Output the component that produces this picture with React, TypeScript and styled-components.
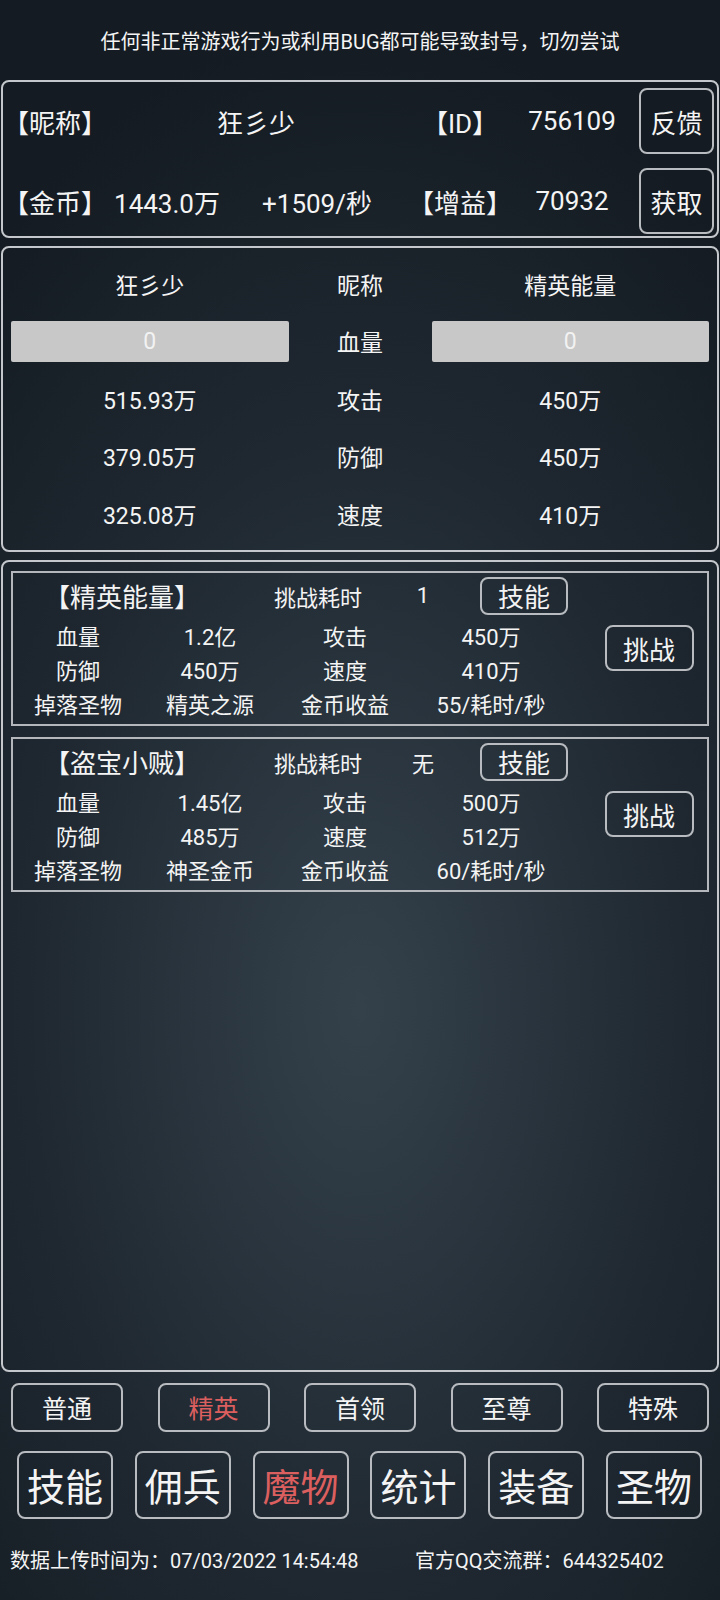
import React from "react";
import styled, { createGlobalStyle, css } from "styled-components";

interface Boss {
  name: string;
  time: string;
  hp: string;
  atk: string;
  def: string;
  spd: string;
  drop: string;
  income: string;
}

const bosses: Boss[] = [
  { name: "精英能量", time: "1", hp: "1.2亿", atk: "450万", def: "450万", spd: "410万", drop: "精英之源", income: "55/耗时/秒" },
  { name: "盗宝小贼", time: "无", hp: "1.45亿", atk: "500万", def: "485万", spd: "512万", drop: "神圣金币", income: "60/耗时/秒" },
];

const tabs = ["普通", "精英", "首领", "至尊", "特殊"];
const navs = ["技能", "佣兵", "魔物", "统计", "装备", "圣物"];

const GlobalStyle = createGlobalStyle`
  html, body {
    margin: 0;
    padding: 0;
    background: #141b22;
  }
  body {
    font-family: Roboto, "Noto Sans CJK SC", sans-serif;
    color: #f4f4f4;
  }
  * {
    box-sizing: border-box;
  }
`;

const Page = styled.div`
  width: 720px;
  min-height: 1600px;
  display: flex;
  flex-direction: column;
  background: radial-gradient(ellipse 80% 62% at 50% 63%, #34414b 0%, #1f2831 58%, #141b22 100%);
`;

const Notice = styled.div`
  height: 80px;
  display: flex;
  align-items: center;
  justify-content: center;
  font-size: 20px;
`;

const Panel = styled.div`
  margin: 0 1px;
  border: 2px solid #c4c8cc;
  border-radius: 8px;
`;

const InfoPanel = styled(Panel)`
  height: 158px;
  padding: 1px 0;
  display: grid;
  grid-template-columns: 103px 122px 178px 108px 116px 1fr;
  grid-template-rows: 76px 76px;
  row-gap: 4px;
  align-items: center;
  font-size: 26px;
`;

const Cell = styled.div<{ $span?: number }>`
  text-align: center;
  white-space: nowrap;
  ${(p) => p.$span && css`grid-column: span ${p.$span};`}
`;

const FrameButton = styled.div<{ $w: number; $h: number; $fs: number; $active?: boolean }>`
  width: ${(p) => p.$w}px;
  height: ${(p) => p.$h}px;
  border: 2px solid #b8bcc0;
  border-radius: 8px;
  display: flex;
  align-items: center;
  justify-content: center;
  font-size: ${(p) => p.$fs}px;
  color: ${(p) => (p.$active ? "#dc5f5f" : "#f4f4f4")};
  flex-shrink: 0;
`;

const ButtonSlot = styled.div`
  display: flex;
  justify-content: center;
  padding-left: 6px;
`;

const StatsPanel = styled(Panel)`
  margin-top: 8px;
  padding: 7px 8px;
  display: grid;
  grid-template-columns: 1fr 143px 1fr;
  grid-auto-rows: 57.5px;
  align-items: center;
  font-size: 23px;
`;

const HpBar = styled.div`
  height: 41px;
  background: #c8c8c8;
  border-radius: 2px;
  display: flex;
  align-items: center;
  justify-content: center;
  color: #f2f2f2;
`;

const BossPanel = styled(Panel)`
  margin-top: 8px;
  height: 812px;
  padding: 9px 8px;
  display: flex;
  flex-direction: column;
  gap: 11px;
`;

const BossCard = styled.div`
  height: 155px;
  border: 2px solid #b4b8bc;
  display: flex;
  align-items: center;
`;

const CardMain = styled.div`
  width: 566px;
  align-self: stretch;
  display: flex;
  flex-direction: column;
  padding-top: 1px;
`;

const TitleRow = styled.div`
  height: 44px;
  display: grid;
  grid-template-columns: 218px 174px 36px auto;
  align-items: center;
  font-size: 22px;
`;

const BossName = styled.div`
  text-align: center;
  font-size: 26px;
`;

const SkillSlot = styled.div`
  padding-left: 39px;
`;

const StatRow = styled.div`
  height: 34px;
  display: grid;
  grid-template-columns: 130px 134px 136px 156px;
  align-items: center;
  font-size: 22px;
`;

const ChallengeSlot = styled.div`
  flex: 1;
  display: flex;
  justify-content: center;
  padding-left: 12px;
`;

const TabRow = styled.div`
  margin: 11px 11px 0;
  display: flex;
  justify-content: space-between;
`;

const NavRow = styled.div`
  margin: 19px 18px 0 17px;
  display: flex;
  justify-content: space-between;
`;

const Footer = styled.div`
  margin-top: 26px;
  padding-left: 10px;
  display: flex;
  font-size: 20px;
  white-space: nowrap;
`;

const FooterItem = styled.div<{ $w?: number }>`
  ${(p) => p.$w && css`width: ${p.$w}px;`}
`;

const App = () => {
  return (
    <Page>
      <GlobalStyle />
      <Notice>任何非正常游戏行为或利用BUG都可能导致封号，切勿尝试</Notice>

      <InfoPanel>
        <Cell>【昵称】</Cell>
        <Cell $span={2}>狂彡少</Cell>
        <Cell>【ID】</Cell>
        <Cell>756109</Cell>
        <ButtonSlot>
          <FrameButton $w={75} $h={66} $fs={26}>反馈</FrameButton>
        </ButtonSlot>
        <Cell>【金币】</Cell>
        <Cell>1443.0万</Cell>
        <Cell>+1509/秒</Cell>
        <Cell>【增益】</Cell>
        <Cell>70932</Cell>
        <ButtonSlot>
          <FrameButton $w={75} $h={66} $fs={26}>获取</FrameButton>
        </ButtonSlot>
      </InfoPanel>

      <StatsPanel>
        <Cell>狂彡少</Cell>
        <Cell>昵称</Cell>
        <Cell>精英能量</Cell>
        <HpBar>0</HpBar>
        <Cell>血量</Cell>
        <HpBar>0</HpBar>
        <Cell>515.93万</Cell>
        <Cell>攻击</Cell>
        <Cell>450万</Cell>
        <Cell>379.05万</Cell>
        <Cell>防御</Cell>
        <Cell>450万</Cell>
        <Cell>325.08万</Cell>
        <Cell>速度</Cell>
        <Cell>410万</Cell>
      </StatsPanel>

      <BossPanel>
        {bosses.map((b) => (
          <BossCard key={b.name}>
            <CardMain>
              <TitleRow>
                <BossName>【{b.name}】</BossName>
                <Cell>挑战耗时</Cell>
                <Cell>{b.time}</Cell>
                <SkillSlot>
                  <FrameButton $w={88} $h={38} $fs={26}>技能</FrameButton>
                </SkillSlot>
              </TitleRow>
              <StatRow>
                <Cell>血量</Cell>
                <Cell>{b.hp}</Cell>
                <Cell>攻击</Cell>
                <Cell>{b.atk}</Cell>
              </StatRow>
              <StatRow>
                <Cell>防御</Cell>
                <Cell>{b.def}</Cell>
                <Cell>速度</Cell>
                <Cell>{b.spd}</Cell>
              </StatRow>
              <StatRow>
                <Cell>掉落圣物</Cell>
                <Cell>{b.drop}</Cell>
                <Cell>金币收益</Cell>
                <Cell>{b.income}</Cell>
              </StatRow>
            </CardMain>
            <ChallengeSlot>
              <FrameButton $w={89} $h={46} $fs={26}>挑战</FrameButton>
            </ChallengeSlot>
          </BossCard>
        ))}
      </BossPanel>

      <TabRow>
        {tabs.map((t) => (
          <FrameButton key={t} $w={112} $h={49} $fs={25} $active={t === "精英"}>
            {t}
          </FrameButton>
        ))}
      </TabRow>

      <NavRow>
        {navs.map((n) => (
          <FrameButton key={n} $w={96} $h={68} $fs={38} $active={n === "魔物"}>
            {n}
          </FrameButton>
        ))}
      </NavRow>

      <Footer>
        <FooterItem $w={405}>数据上传时间为：07/03/2022 14:54:48</FooterItem>
        <FooterItem>官方QQ交流群：644325402</FooterItem>
      </Footer>
    </Page>
  );
};

export default App;
